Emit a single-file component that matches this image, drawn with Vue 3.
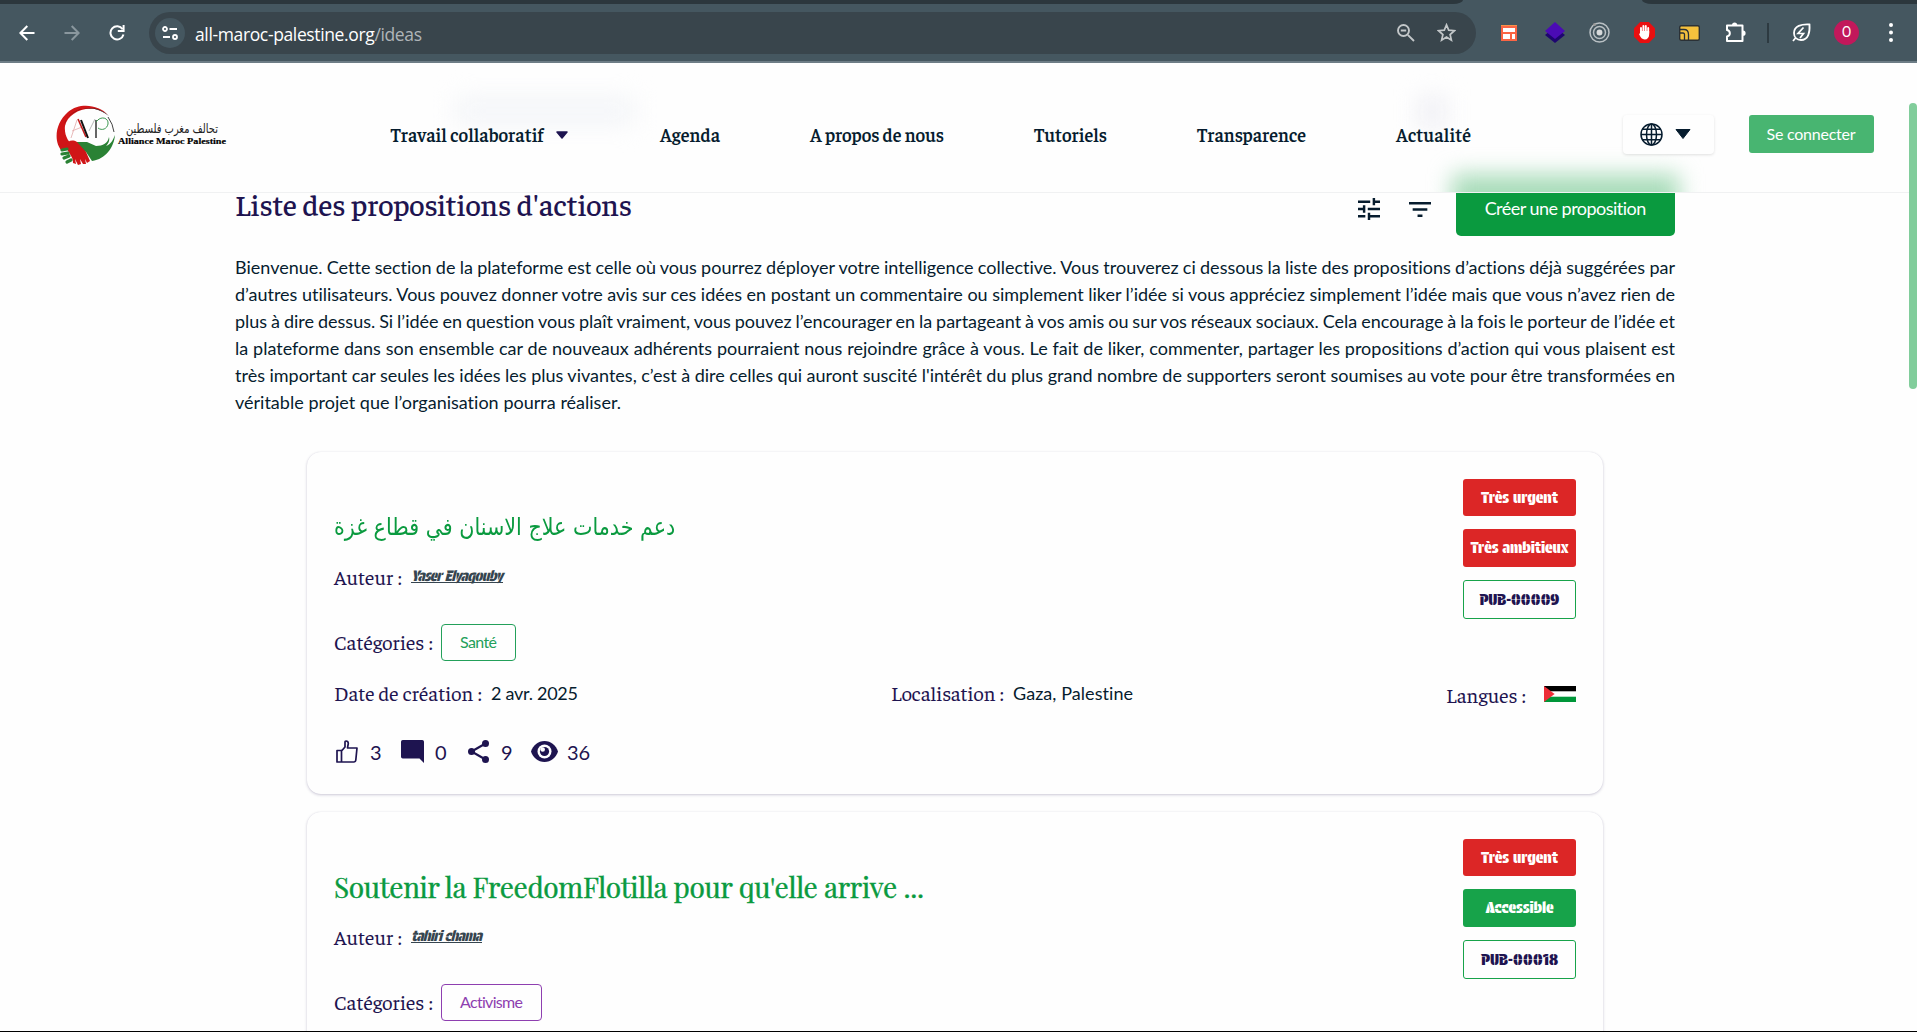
<script setup>
// Adjusts tracking (or word spacing, with .words) so that a text takes up the given width.
const vFit = {
  mounted(el, { value, modifiers }) {
    const w = el.getBoundingClientRect().width
    if (modifiers.words) {
      const gaps = el.textContent.split(' ').length - 1
      el.style.wordSpacing = `${(value - w) / gaps}px`
      return
    }
    const n = [...el.textContent].length
    if (n > 1) {
      const s = (value - w) / (n - 1)
      el.style.letterSpacing = `${s}px`
      el.style.marginRight = `${-s}px`
    }
  },
}

const nav = [
  { label: 'Travail collaboratif', w: 153, menu: true },
  { label: 'Agenda', w: 60 },
  { label: 'A propos de nous', w: 134 },
  { label: 'Tutoriels', w: 73 },
  { label: 'Transparence', w: 109 },
  { label: 'Actualité', w: 75 },
]

const intro = [
  'Bienvenue. Cette section de la plateforme est celle où vous pourrez déployer votre intelligence collective. Vous trouverez ci dessous la liste des propositions d’actions déjà suggérées par',
  'd’autres utilisateurs. Vous pouvez donner votre avis sur ces idées en postant un commentaire ou simplement liker l’idée si vous appréciez simplement l’idée mais que vous n’avez rien de',
  'plus à dire dessus. Si l’idée en question vous plaît vraiment, vous pouvez l’encourager en la partageant à vos amis ou sur vos réseaux sociaux. Cela encourage à la fois le porteur de l’idée et',
  'la plateforme dans son ensemble car de nouveaux adhérents pourraient nous rejoindre grâce à vous. Le fait de liker, commenter, partager les propositions d’action qui vous plaisent est',
  "très important car seules les idées les plus vivantes, c’est à dire celles qui auront suscité l'intérêt du plus grand nombre de supporters seront soumises au vote pour être transformées en",
  'véritable projet que l’organisation pourra réaliser.',
]

const ideas = [
  {
    title: 'دعم خدمات علاج الاسنان في قطاع غزة',
    arabic: true,
    author: 'Yaser Elyaqouby',
    authorW: 92,
    category: 'Santé',
    catW: 37,
    catClass: 'health',
    badges: [
      { text: 'Très urgent', w: 77, kind: 'red' },
      { text: 'Très ambitieux', w: 98, kind: 'red' },
      { text: 'PUB-00009', w: 80, kind: 'code' },
    ],
  },
  {
    title: "Soutenir la FreedomFlotilla pour qu'elle arrive ...",
    titleW: 590,
    author: 'tahiri chama',
    authorW: 71,
    category: 'Activisme',
    catW: 63,
    catClass: 'activism',
    badges: [
      { text: 'Très urgent', w: 77, kind: 'red' },
      { text: 'Accessible', w: 68, kind: 'green' },
      { text: 'PUB-00018', w: 77, kind: 'code' },
    ],
  },
]
</script>

<template>
  <div class="window">
    <div class="tabstrip"><i class="tab-left"></i><i class="tab-active"></i><i class="tab-right"></i></div>
    <div class="toolbar">
      <div class="nav-icons">
        <svg width="16" height="16" viewBox="0 0 16 16" fill="none" stroke="#fff" stroke-width="2"><path d="M15.500 8H1.500M8.300 1 1.400 8l6.900 7" /></svg>
        <svg width="16" height="16" viewBox="0 0 16 16" fill="none" stroke="#8a979e" stroke-width="2"><path d="M.5 8h14M7.700 1l6.900 7-6.900 7" /></svg>
        <svg width="16" height="16" viewBox="0 0 16 16" fill="none" stroke="#fff" stroke-width="2"><path d="M13.600 4.200A6.600 6.600 0 1 0 14.500 9.500M14.600 0v6H8.800" /></svg>
      </div>
      <div class="address">
        <span class="site">
          <svg width="16" height="14" viewBox="0 0 16 14" fill="none" stroke="#fff" stroke-width="1.800"><circle cx="3" cy="3" r="2" /><path d="M7.500 3H15M1 11h7" /><circle cx="13" cy="11" r="2" /></svg>
        </span>
        <span v-fit="227" class="url">all-maroc-palestine.org<em>/ideas</em></span>
        <svg class="lens" width="18" height="18" viewBox="0 0 18 18" fill="none" stroke="#c3c7c9" stroke-width="1.900"><circle cx="6.500" cy="6.500" r="5.500" /><path d="M3.800 6.500h5.400M10.800 10.800l6.200 6.200" /></svg>
        <svg class="star" width="19" height="19" viewBox="0 0 19 19" fill="none" stroke="#c3c7c9" stroke-width="1.700"><path d="m9.500 1.900 2.200 5.300 5.700.5-4.300 3.800 1.300 5.600-4.900-3-4.900 3 1.300-5.600L1.600 7.700l5.700-.5z" /></svg>
      </div>
      <div class="extensions">
        <svg width="16" height="16" viewBox="0 0 16 16"><path fill="#fb6544" d="M0 0h16v16H0z" /><path fill="#fff" d="M2 3h12v4H2zM2 9h7v5H2zM11 9h3v5h-3z" /><path fill="#f8924a" d="M0 0h16v1H0z" /></svg>
        <svg width="20" height="21" viewBox="0 0 20 21"><path fill="#1e0570" d="m0 13 10-8 10 8-10 8z" /><path fill="#4b0bb5" d="m0 9 10-9 10 9-10 8z" /></svg>
        <svg width="21" height="21" viewBox="0 0 21 21" fill="none" stroke="#b9c0c4" stroke-width="1.500"><circle cx="10.500" cy="10.500" r="9.500" /><circle cx="10.500" cy="10.500" r="6" /><circle cx="10.500" cy="10.500" r="2.200" fill="#d7dadb" stroke="#d7dadb" /><circle cx="5.500" cy="2.500" r="1.500" fill="#999" stroke="none" /></svg>
        <svg width="21" height="21" viewBox="0 0 21 21"><path fill="#e90f10" d="M6.200 0h8.600L21 6.200v8.600L14.800 21H6.200L0 14.800V6.200z" /><path d="M7 12V6M9.400 10V4M11.800 10V4M14.200 11V6" stroke="#fff" stroke-width="1.900" stroke-linecap="round" /><path fill="#fff" d="M6 9h9.200v3c0 3.600-1.800 5.500-4.500 5.500-2.500 0-4-1.800-5.600-5.200L6 11z" /></svg>
        <svg width="21" height="16" viewBox="0 0 21 16"><rect x=".7" y=".7" width="19.600" height="14.600" rx="1.500" fill="#f5c13d" stroke="#2b3136" stroke-width="1.400" /><path d="M1 4.500h4q4.500 0 4.500 5V15M5.500 15V9.500q0-1.500-1.500-1.500H1" fill="none" stroke="#2b3136" stroke-width="1.300" /></svg>
        <svg width="21" height="21" viewBox="0 0 21 21" fill="none" stroke="#fff" stroke-width="2" stroke-linejoin="round"><path d="M2 3.500h15.500v15.500H2v-4.500c3.800-1 3.800-5.500 0-6.500z" /><path fill="#fff" stroke="none" d="M7 3a2.600 2.600 0 0 1 5.200 0zM18 8.600a2.600 2.600 0 0 1 0 5.200z" /></svg>
        <i class="divider"></i>
        <svg width="19" height="19" viewBox="0 0 19 19" fill="none" stroke="#fff" stroke-width="1.800"><path d="M17.500 1.500C9.500 1 2 3 2 10c0 4.500 3 7 7 7 7.500 0 9-8 8.500-15.500zM1 18l2.500-3" /><path d="M11.500 4.500 6 10.500h5.500L8 15" stroke-width="1.700" /></svg>
        <span class="avatar">O</span>
        <svg width="4" height="19" viewBox="0 0 4 19" fill="#fff"><circle cx="2" cy="2" r="2" /><circle cx="2" cy="9.500" r="2" /><circle cx="2" cy="17" r="2" /></svg>
      </div>
    </div>

    <header class="header">
      <i class="ghost ghost-title"></i>
      <i class="ghost ghost-icon"></i>
      <i class="ghost ghost-button"></i>
      <svg class="logo" width="180" height="64" viewBox="0 0 180 64">
        <path fill="#d01517" d="M52 12C43 2 24-1 12 9-2 21-2 40 6 48l14-5c-8-2-12-12-11-20C12 8 36-1 52 12z" />
        <path fill="#111" d="M54 14C38-1 13 4 8 22c2-5 4-9 9-12 12-8 27-6 37 4z" />
        <path d="M52 14q5 7 6 15" fill="none" stroke="#111" stroke-width=".8" />
        <path d="M21 17 15 35M16 28l10-4" fill="none" stroke="#e3a9a9" stroke-width=".8" />
        <path d="m22 16 8 18" fill="none" stroke="#c41b1b" stroke-width="1.600" />
        <path d="m25 17 7 18" fill="none" stroke="#111" stroke-width="2" />
        <path d="m33 28 6-12" fill="none" stroke="#999" stroke-width=".7" />
        <path d="M40 35V17" fill="none" stroke="#333" stroke-width="1.500" />
        <path d="M40 19c5-7 13-4 12 2-1 5-6 7-10 4" fill="none" stroke="#3d9851" stroke-width="1" />
        <path fill="#2a8234" d="m19 39 12 0 9 4c7 0 12-3 13-9 1 4-1 7-3 9 5-2 7-6 9-11-1 12-9 24-23 26l-6-9c-4-2-7-3-10-7z" />
        <path fill="#d01517" d="M9 42c3-4 7-6 12-3l9 10 4 9-3 2-2-4 1 5-3 0-3-5 1 5-3 1-3-6 1 5-3-1c0-7-3-7-8-18z" />
        <path d="m6 47 5-1M6 51l6-1M8 55l5-2M11 59l4-2" stroke="#2a8234" stroke-width="3.200" stroke-linecap="round" />
        <text x="70" y="30" textLength="92" lengthAdjust="spacingAndGlyphs" class="logo-ar">تحالف مغرب فلسطين</text>
        <text x="62" y="40.500" textLength="108" lengthAdjust="spacingAndGlyphs" class="logo-fr">Alliance Maroc Palestine</text>
      </svg>
      <nav class="menu">
        <a v-for="item in nav" :key="item.label">
          <span v-fit="item.w">{{ item.label }}</span>
          <svg v-if="item.menu" width="12" height="8" viewBox="0 0 12 8"><path d="M1 1h10L6 7z" fill="#1e1450" stroke="#1e1450" stroke-width="1.500" stroke-linejoin="round" /></svg>
        </a>
      </nav>
      <button class="lang">
        <svg width="23" height="23" viewBox="0 0 23 23" fill="none" stroke="#061c2e" stroke-width="1.500"><circle cx="11.500" cy="11.500" r="10.500" /><ellipse cx="11.500" cy="11.500" rx="5" ry="10.500" /><path d="M11.500 1v21M1 11.500h21M2.700 6.300h17.600M2.700 16.700h17.600" /></svg>
        <svg width="16" height="10" viewBox="0 0 16 10"><path d="M1 .5h14L8 9.500z" fill="#061c2e" stroke="#061c2e" stroke-linejoin="round" /></svg>
      </button>
      <button class="login"><span v-fit="89">Se connecter</span></button>
    </header>

    <div class="page">
      <main>
        <div class="heading">
          <h1><span v-fit="397">Liste des propositions d'actions</span></h1>
          <svg class="tune" width="22" height="22" viewBox="3 3 18 18" fill="#061c2e"><path d="M3 17v2h6v-2zM3 5v2h10V5zm10 16v-2h8v-2h-8v-2h-2v6zM7 9v2H3v2h4v2h2V9zm14 4v-2H11v2zm-6-4h2V7h4V5h-4V3h-2z" /></svg>
          <svg class="filter" width="22" height="15" viewBox="3 6 18 12" preserveAspectRatio="none" fill="#061c2e"><path d="M10 18h4v-2h-4zM3 6v2h18V6zm3 7h12v-2H6z" /></svg>
          <button class="create"><span v-fit="162">Créer une proposition</span></button>
        </div>
        <p class="intro">
          <template v-for="(line, i) in intro" :key="line"><span v-fit.words="i < 5 ? 1440 : 386">{{ line }}</span></template>
        </p>

        <article v-for="idea in ideas" :key="idea.author" class="card">
          <div class="top">
            <div class="info">
              <h2 v-if="idea.arabic" class="arabic">{{ idea.title }}</h2>
              <h2 v-else><span v-fit="idea.titleW">{{ idea.title }}</span></h2>
              <div class="row author">
                <b class="label"><span v-fit="68">Auteur :</span></b>
                <a class="name"><span v-fit="idea.authorW">{{ idea.author }}</span></a>
              </div>
              <div class="row cats">
                <b class="label"><span v-fit="99">Catégories :</span></b>
                <span class="cat" :class="idea.catClass"><span v-fit="idea.catW">{{ idea.category }}</span></span>
              </div>
            </div>
            <div class="badges">
              <span v-for="b in idea.badges" :key="b.text" class="badge" :class="b.kind"><span v-fit="b.w">{{ b.text }}</span></span>
            </div>
          </div>
          <div class="meta">
            <div class="row date"><b class="label"><span v-fit="148">Date de création :</span></b><span v-fit="87" class="value">2 avr. 2025</span></div>
            <div class="row place"><b class="label"><span v-fit="113">Localisation :</span></b><span v-fit="120" class="value">Gaza, Palestine</span></div>
            <div class="row langs">
              <b class="label"><span v-fit="80">Langues :</span></b>
              <svg width="32" height="16" viewBox="0 0 32 16"><path fill="#fff" d="M0 0h32v16H0z" /><path d="M0 0h32v5.300H0z" /><path fill="#009639" d="M0 10.700h32V16H0z" /><path fill="#ed2e38" d="m0 0 10.600 8L0 16z" /></svg>
            </div>
          </div>
          <div class="stats">
            <svg width="22" height="23" viewBox="0 0 22 23" fill="none" stroke="#1e1450" stroke-width="1.700" stroke-linejoin="round"><path d="M1 10.500h4.500V22H1zM5.500 11 9 7V1.800Q9 1 10 1c1.800 0 2.300 1 2.300 2.500L11.500 8h9.500l-1.200 12c-.2 1.400-.8 2-2 2H5.500" /></svg>
            <span class="n1">3</span>
            <svg width="23" height="23" viewBox="0 0 23 23"><path fill="#1e1450" d="M1.800 0h19.400Q23 0 23 1.800V23l-4.500-4.500H1.800Q0 18.500 0 16.800v-15Q0 0 1.800 0z" /></svg>
            <span class="n2">0</span>
            <svg width="21" height="23" viewBox="0 0 21 23"><path d="M17.500 3.500 3.500 11.500l14 8" fill="none" stroke="#1e1450" stroke-width="2.200" /><g fill="#1e1450"><circle cx="17.500" cy="3.500" r="3.500" /><circle cx="3.500" cy="11.500" r="3.500" /><circle cx="17.500" cy="19.500" r="3.500" /></g></svg>
            <span class="n3">9</span>
            <svg width="27" height="21" viewBox="0 0 27 21"><path fill="#1e1450" d="M13.500 0C7 0 2 4.500 0 10.500 2 16.500 7 21 13.500 21S25 16.500 27 10.500C25 4.500 20 0 13.500 0z" /><circle cx="13.500" cy="10.500" r="7" fill="#fefefe" /><circle cx="13.500" cy="10.500" r="4.600" fill="#1e1450" /><circle cx="11.700" cy="8.500" r="2.300" fill="#fefefe" /></svg>
            <span class="n4">36</span>
          </div>
        </article>
      </main>
      <i class="scrollbar"></i>
    </div>
  </div>
</template>

<style>
html,
body {
  margin: 0;
  overflow: hidden;
}
</style>

<style scoped>
* {
  box-sizing: border-box;
}
.window {
  width: 1917px;
  height: 1032px;
  display: flex;
  flex-direction: column;
  overflow: hidden;
  background: #fefefe;
  border-bottom: 1px solid #000;
  font-family: Lato, "Liberation Sans", sans-serif;
  font-variant-ligatures: none;
  color: #061c2e;
}
svg {
  display: block;
  flex: none;
}
button {
  border: 0;
  padding: 0;
  font-family: inherit;
  display: flex;
  align-items: center;
  justify-content: center;
}
.tabstrip {
  height: 4px;
  flex: none;
  display: flex;
  background: #455760;
}
.tab-left {
  width: 1463px;
  background: #2c373d;
  border-bottom-right-radius: 10px 4px;
}
.tab-active {
  width: 179px;
}
.tab-right {
  flex: 1;
  background: #2c373d;
  border-bottom-left-radius: 10px 4px;
}
.toolbar {
  height: 59px;
  flex: none;
  display: flex;
  align-items: center;
  padding-left: 19px;
  background: #455760;
  border-bottom: 2px solid #6d7d86;
}
.nav-icons {
  display: flex;
  gap: 29px;
  width: 130px;
}
.address {
  width: 1327px;
  height: 42px;
  border-radius: 21px;
  background: #39454c;
  display: flex;
  align-items: center;
  padding: 0 20px 0 6px;
}
.site {
  width: 30px;
  height: 30px;
  border-radius: 50%;
  background: #455760;
  display: flex;
  align-items: center;
  justify-content: center;
}
.url {
  margin: 2px 0 0 10px;
  font: 17.5px "Open Sans", "Noto Sans", sans-serif;
  color: #fff;
  white-space: nowrap;
}
.url em {
  font-style: normal;
  color: #b0b5b8;
}
.lens {
  margin-left: auto;
}
.star {
  margin-left: 22px;
}
.extensions {
  display: flex;
  align-items: center;
  margin-left: 25px;
}
.extensions > :nth-child(2) { margin-left: 28px; }
.extensions > :nth-child(3) { margin-left: 24px; }
.extensions > :nth-child(4) { margin-left: 24px; }
.extensions > :nth-child(5) { margin-left: 24px; }
.extensions > :nth-child(6) { margin-left: 25px; }
.extensions > :nth-child(7) { margin-left: 21px; }
.extensions > :nth-child(8) { margin-left: 23px; }
.extensions > :nth-child(9) { margin-left: 23px; }
.extensions > :nth-child(10) { margin-left: 30px; }
.divider {
  width: 2px;
  height: 20px;
  background: #2d3a41;
}
.avatar {
  width: 25px;
  height: 25px;
  border-radius: 50%;
  background: #c2185b;
  color: #fff;
  font: 14px/25px Roboto, sans-serif;
  text-align: center;
}
.header {
  position: relative;
  height: 130px;
  flex: none;
  overflow: hidden;
  display: flex;
  align-items: center;
  background: #fefefe;
  border-bottom: 1px solid #f0f1f2;
}
.header > :not(.ghost) {
  position: relative;
}
.ghost {
  position: absolute;
}
.ghost-title {
  left: 455px;
  top: 37px;
  width: 180px;
  height: 22px;
  background: #f1f3f7;
  filter: blur(13px);
}
.ghost-icon {
  left: 1418px;
  top: 33px;
  width: 28px;
  height: 32px;
  background: #f0f0f5;
  filter: blur(11px);
}
.ghost-button {
  left: 1452px;
  top: 111px;
  width: 227px;
  height: 60px;
  background: #a9dcba;
  filter: blur(11px);
}
.logo {
  margin-left: 56px;
  margin-top: 14px;
}
.logo-ar {
  font: 13px "DejaVu Sans", sans-serif;
  fill: #222;
  direction: ltr;
}
.logo-fr {
  font: bold 9px "Liberation Serif", serif;
  fill: #000;
  stroke: #000;
  stroke-width: 0.2px;
}
.menu {
  display: flex;
  gap: 90px;
  margin: 15px 0 0 154.500px;
}
.menu a {
  display: flex;
  align-items: center;
  font: 600 18.5px/24px Faustina, "Source Serif Pro", "Liberation Serif", serif;
  white-space: nowrap;
}
.menu svg {
  margin: 0 2.5px 0 12px;
}
.lang {
  width: 91px;
  height: 39px;
  gap: 12px;
  margin: 14px 0 0 151.500px;
  padding: 0 6px 1px 0;
  background: #fefefe;
  border-radius: 4px;
  box-shadow: 0 1px 3px rgba(0, 0, 0, 0.12);
}
.login {
  width: 125px;
  height: 38px;
  margin: 13px 0 0 35px;
  padding-bottom: 1px;
  border-radius: 3px;
  background: #48b571;
  color: #fff;
  font-size: 16px;
}
.page {
  flex: 1;
  display: flex;
  min-height: 0;
}
main {
  width: 1909px;
  flex: none;
  display: flex;
  flex-direction: column;
}
.heading {
  display: flex;
  align-items: flex-start;
  height: 43px;
  margin-left: 235px;
}
h1,
h2 {
  margin: 0;
  font-weight: 400;
  white-space: nowrap;
}
h1 {
  width: 1123px;
  font: 500 30px/36px Faustina, "Source Serif Pro", "Liberation Serif", serif;
  color: #1e1450;
  margin-top: -7px;
}
.tune {
  margin-top: 5px;
}
.filter {
  margin: 9px 0 0 29px;
}
.create {
  width: 219px;
  height: 43px;
  margin-left: 25px;
  padding-bottom: 13px;
  border-radius: 0 0 5px 5px;
  background: #0a9a3f;
  color: #fff;
  font-size: 18px;
}
.intro {
  display: flex;
  flex-direction: column;
  align-items: flex-start;
  width: 1440px;
  margin: 18px 0 36px 235px;
  font-size: 18px;
  line-height: 27px;
}
.intro span {
  white-space: nowrap;
  height: 27px;
}
.card {
  width: 1296px;
  height: 342px;
  flex: none;
  margin: 0 0 18px 307px;
  padding: 27px;
  border-radius: 14px;
  background: #fefefe;
  box-shadow: 0 1px 3px rgba(30, 20, 80, 0.22), 0 0 1px rgba(30, 20, 80, 0.1);
}
.top {
  display: flex;
  justify-content: space-between;
  height: 182px;
}
h2 {
  margin-top: 28px;
  height: 40px;
  font: 28px/40px "Playfair Display", "Liberation Serif", serif;
  color: #0a9a3f;
  -webkit-text-stroke: 0.4px #0a9a3f;
}
h2.arabic {
  width: 397px;
  font: 24px/40px "DejaVu Sans", sans-serif;
  -webkit-text-stroke: 0;
  transform: scaleX(0.861);
  transform-origin: left;
}
.row {
  display: flex;
  align-items: center;
  height: 30px;
  white-space: nowrap;
}
.label {
  font: 400 20.5px/30px Faustina, "Source Serif Pro", "Liberation Serif", serif;
  color: #1e1450;
  margin-top: -1px;
}
.author {
  margin-top: 15px;
}
.author .label {
  width: 77px;
}
.name {
  font: italic 400 14.5px/15px "Protest Guerrilla", Lato, sans-serif;
  color: #36454f;
  border-bottom: 1px solid #36454f;
  height: 15px;
  margin-bottom: 3px;
}
.cats {
  margin-top: 32px;
  height: 37px;
}
.cats .label {
  width: 107px;
}
.cat {
  height: 37px;
  padding: 0 18px 2px;
  border: 1px solid;
  border-radius: 4px;
  font-size: 16px;
  line-height: 33px;
}
.health {
  color: #23a05a;
}
.activism {
  color: #8e3fb0;
}
.badges {
  display: flex;
  flex-direction: column;
  width: 113px;
}
.badge {
  height: 37px;
  margin-bottom: 13px;
  border-radius: 3px;
  display: flex;
  align-items: center;
  justify-content: center;
  padding-bottom: 1px;
  font: 400 16px "Protest Guerrilla", Lato, sans-serif;
  color: #fff;
  white-space: nowrap;
}
.badge:nth-child(2) {
  height: 38px;
}
.red {
  background: #dc2626;
}
.green {
  background: #17a34a;
}
.code {
  height: 39px;
  border: 1px solid #17a34a;
  color: #1e1450;
}
.meta {
  display: flex;
  margin-top: 17px;
}
.date {
  width: 557px;
}
.date .label {
  width: 157px;
}
.place .label {
  width: 122px;
}
.value {
  font-size: 18px;
}
.langs {
  margin-left: auto;
}
.langs .label {
  width: 98px;
  margin-top: 3px;
}
.langs svg {
  margin-top: 2px;
}
.stats {
  display: flex;
  align-items: center;
  height: 30px;
  margin-top: 28px;
  padding-left: 2px;
  font-size: 20px;
  color: #1e1450;
}
.stats span {
  margin: 2px 0 0 10px;
}
.stats .n1 {
  width: 31px;
  margin-left: 12px;
}
.stats .n2 {
  width: 33px;
  margin-left: 11px;
}
.stats .n3 {
  width: 30px;
  margin-left: 12px;
}
.stats .n4 {
  margin-left: 9px;
}
.scrollbar {
  width: 8px;
  height: 286px;
  margin-top: -90px;
  position: relative;
  border-radius: 5px;
  background: #81cd9b;
}
</style>
